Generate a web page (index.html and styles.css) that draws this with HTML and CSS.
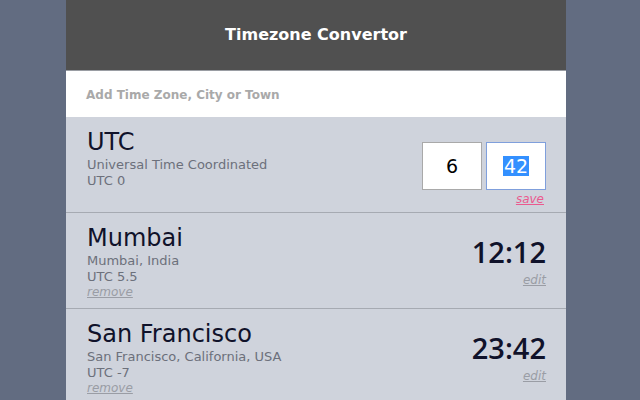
FILE: index.html
```
<!DOCTYPE html>
<html>
<head>
<meta charset="utf-8">
<link rel="stylesheet" href="styles.css">
</head>
<body>
<div class="app">
  <header class="header">Timezone Convertor</header>
  <div class="search">Add Time Zone, City or Town</div>
  <div class="zone">
    <div class="info">
      <div class="name">UTC</div>
      <div class="sub">Universal Time Coordinated</div>
      <div class="sub">UTC 0</div>
    </div>
    <div class="side">
      <div class="inputs">
        <div class="box">6</div>
        <div class="box focus"><span class="sel">42</span></div>
      </div>
      <a class="link save">save</a>
    </div>
  </div>
  <div class="zone">
    <div class="info">
      <div class="name">Mumbai</div>
      <div class="sub">Mumbai, India</div>
      <div class="sub">UTC 5.5</div>
      <a class="link remove">remove</a>
    </div>
    <div class="side">
      <div class="time">12:12</div>
      <a class="link edit">edit</a>
    </div>
  </div>
  <div class="zone">
    <div class="info">
      <div class="name">San Francisco</div>
      <div class="sub">San Francisco, California, USA</div>
      <div class="sub">UTC -7</div>
      <a class="link remove">remove</a>
    </div>
    <div class="side">
      <div class="time">23:42</div>
      <a class="link edit">edit</a>
    </div>
  </div>
</div>
</body>
</html>
```
FILE: styles.css
```
* { box-sizing: border-box; }
html, body { margin: 0; padding: 0; height: 100%; }
body {
  background: #626c81;
  font-family: "DejaVu Sans", "Noto Sans", sans-serif;
  overflow: hidden;
}
.app {
  width: 500px;
  margin-left: 66px;
  background: #cfd3dc;
  min-height: 100%;
}
.header {
  height: 70px;
  background: #505050;
  color: #fff;
  font-weight: bold;
  font-size: 16px;
  display: flex;
  align-items: center;
  justify-content: center;
  padding-bottom: 2px;
}
.search {
  height: 47px;
  background: #fff;
  border-top: 1px solid #9a9da3;
  color: #a9a9a9;
  font-size: 12px;
  font-weight: bold;
  padding-left: 20px;
  display: flex;
  align-items: center;
  padding-top: 1px;
}
.zone {
  display: flex;
  justify-content: space-between;
  padding: 10px 20px 0 21px;
  height: 96px;
  border-bottom: 1px solid #a6aab2;
}
.name {
  font-size: 24px;
  color: #10122a;
  line-height: 30px;
}
.sub {
  font-size: 13px;
  color: #6c707b;
  line-height: 16px;
}
.link {
  display: block;
  font-size: 12px;
  font-style: italic;
  color: #9a9da5;
  text-decoration: underline;
  line-height: 14px;
}
.side {
  display: flex;
  flex-direction: column;
  align-items: flex-end;
}
.inputs {
  display: flex;
  gap: 4px;
  margin-top: 15px;
}
.box {
  width: 60px;
  height: 48px;
  background: #fff;
  border: 1px solid #a9a9a9;
  display: flex;
  align-items: center;
  justify-content: center;
  font-size: 19px;
  color: #000;
}
.box.focus { border: 1px solid #7f9fdc; }
.sel {
  display: inline-block;
  background: #3390ff;
  color: #fff;
  line-height: 20px;
  padding: 0 1px;
}
.save {
  color: #ea5a8f;
  margin-top: 2px;
  margin-right: 2px;
}
.time {
  font-family: "Open Sans", "DejaVu Sans", sans-serif;
  font-size: 29px;
  font-weight: 600;
  color: #10122a;
  line-height: 34px;
  margin-top: 12px;
}
.edit { margin-top: 4px; }
```
